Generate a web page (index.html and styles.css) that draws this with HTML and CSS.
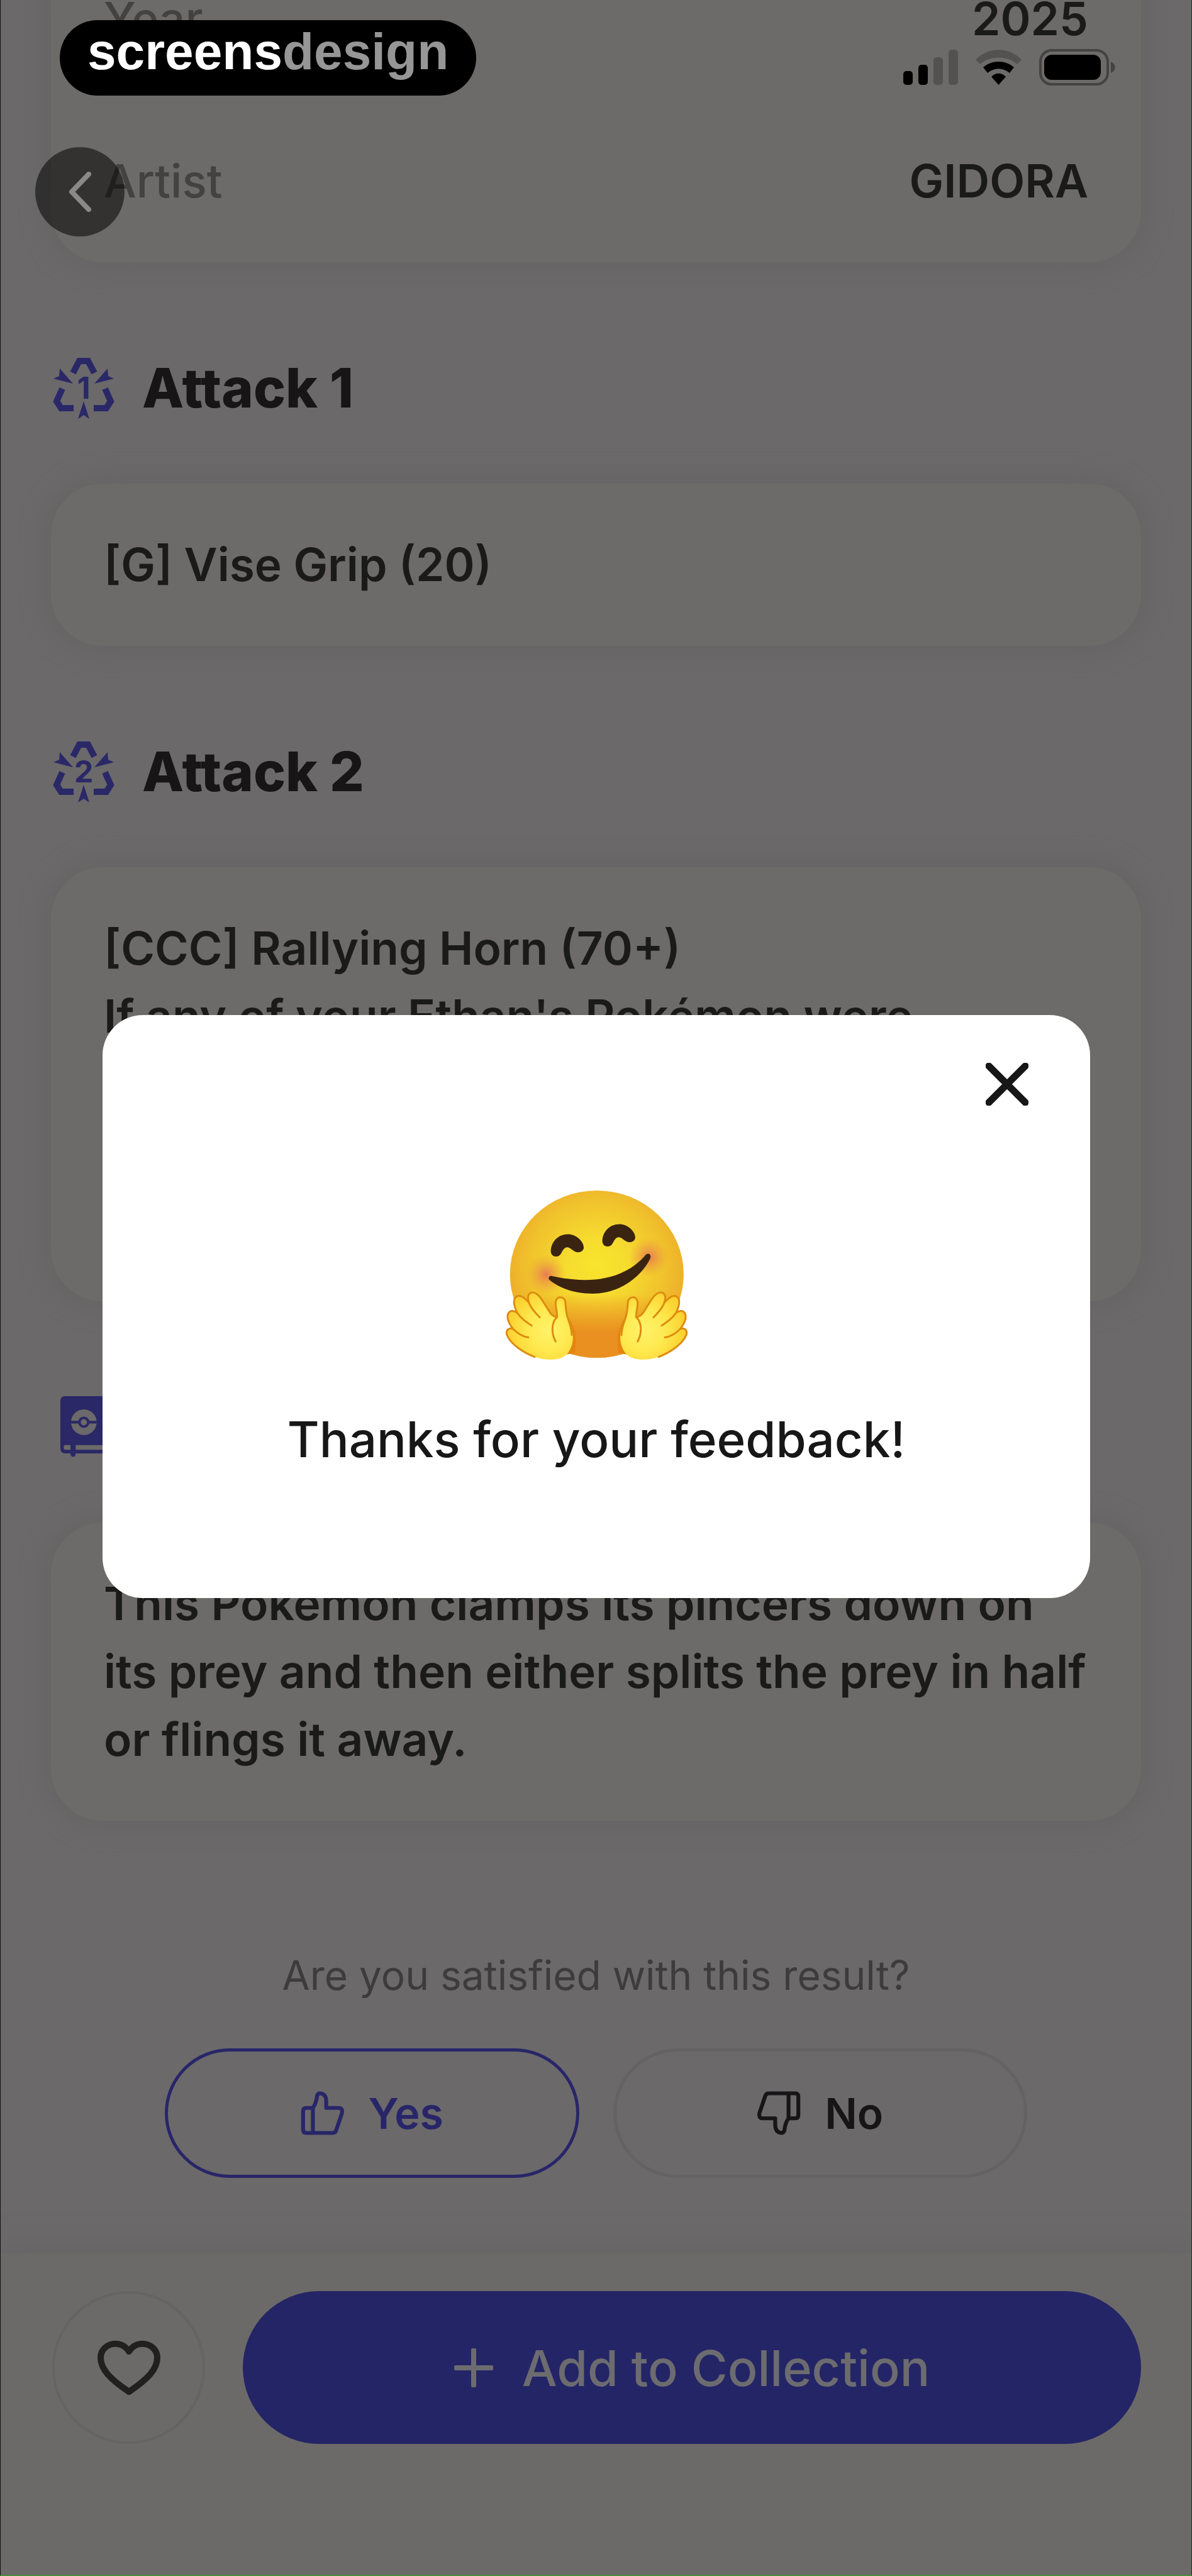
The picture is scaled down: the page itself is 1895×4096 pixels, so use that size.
FILE: index.html
```html
<!DOCTYPE html>
<html lang="en">
<head>
    <meta charset="UTF-8">
    <meta name="viewport" content="width=device-width, initial-scale=1.0">
    <title>Card details</title>
    <link rel="stylesheet" href="styles.css">
</head>
<body>
    <div class="screen">
        <!-- logo -->
        <div class="brand">screens<span class="brand-dim">design</span></div>
        <!-- status bar -->
        <div class="status">
            <svg class="signal" viewBox="0 0 87 56">
                <rect x="0" y="34" width="15" height="22" rx="5" fill="#000"/>
                <rect x="24" y="24" width="15" height="32" rx="5" fill="#000"/>
                <rect x="48" y="12" width="15" height="44" rx="5" fill="#535251"/>
                <rect x="72" y="0" width="15" height="56" rx="5" fill="#535251"/>
            </svg>
            <svg class="wifi" viewBox="0 0 73 56">
                <path d="M0 16C20 -5 53 -5 73 16L66 23C50 9 23 9 7 23Z" fill="#535251"/>
                <path d="M12 28C26 16 47 16 61 28L54 37C43 28 30 28 19 37Z" fill="#000"/>
                <path d="M25 43C32 36 41 36 48 43L36.500 56Z" fill="#000"/>
            </svg>
            <svg class="battery" viewBox="0 0 122 58">
                <rect x="2" y="2" width="107" height="54" rx="18" fill="none" stroke="#444342" stroke-width="4"/>
                <rect x="8" y="9" width="90" height="40" rx="12" fill="#000"/>
                <path d="M114 20C123 24 123 34 114 38Z" fill="#444342"/>
            </svg>
        </div>
        <button class="back" aria-label="Back">
            <svg viewBox="0 0 36 64"><path d="M32 4L5 32L32 60"/></svg>
        </button>

        <main class="content">
            <dl class="card details">
                <div class="row"><dt>Year</dt><dd>2025</dd></div>
                <div class="row"><dt>Artist</dt><dd>GIDORA</dd></div>
            </dl>

            <h2 class="title">
                <svg class="title-icon" viewBox="0 0 98 98">
                    <use href="#attack"/>
                    <text x="49" y="66">1</text>
                </svg>
                Attack 1
            </h2>
            <p class="card">[G] Vise Grip (20)</p>

            <h2 class="title">
                <svg class="title-icon" viewBox="0 0 98 98">
                    <g id="attack">
                        <path d="M32 25L42 6H56L66 25M15 50L6 70L13 81H33M83 50L92 70L85 81H65" fill="none" stroke="#2a2866" stroke-width="10"/>
                        <path d="M11 18L32 42L1 34L10 30ZM87 18L66 42L97 34L88 30ZM49 70L58 98L49 92L40 98Z"/>
                    </g>
                    <text x="49" y="66">2</text>
                </svg>
                Attack 2
            </h2>
            <p class="card">[CCC] Rallying Horn (70+)<br>If any of your Ethan's Pokémon were<br>Knocked Out by damage from an attack<br>during your opponent's last turn, this<br>attack does 100 more damage.</p>

            <h2 class="title">
                <svg class="title-icon" viewBox="21 38 336 336">
                    <path d="M88 38H320V350H88Q62 350 62 322V64Q62 38 88 38Z"/>
                    <circle cx="190" cy="180" r="70" fill="#6b696a"/>
                    <path d="M120 180H260" stroke="#2a2866" stroke-width="15"/>
                    <circle cx="190" cy="180" r="24" fill="#6b696a" stroke="#2a2866" stroke-width="14"/>
                    <path d="M84 305H118V330H84Q76 318 84 305ZM145 305H320V330H145Z" fill="#6b696a"/>
                    <path d="M118 300H145V360Q131 378 118 360Z"/>
                </svg>
                Pokédex
            </h2>
            <p class="card">This Pokémon clamps its pincers down on<br>its prey and then either splits the prey in half<br>or flings it away.</p>

            <p class="question">Are you satisfied with this result?</p>
            <div class="answers">
                <button class="answer answer-on">
                    <svg viewBox="84 64 238 238"><use href="#thumb"/></svg>
                    Yes
                </button>
                <button class="answer">
                    <svg viewBox="84 64 238 238"><g transform="rotate(180 203 183)"><path id="thumb" d="M150 155H114Q97 155 97 172V272Q97 290 115 290H256Q270 290 275 278L307 184Q313 155 290 155H222V116Q220 76 185 76Q175 78 172 92Q168 130 150 155V290"/></g></svg>
                    No
                </button>
            </div>
        </main>

        <footer class="bar">
            <button class="like" aria-label="Like">
                <svg viewBox="0 0 100 88"><path d="M50 82C20 62 5 46 5 28C5 6 36 -4 50 18C64 -4 95 6 95 28C95 46 80 62 50 82Z"/></svg>
            </button>
            <button class="add">
                <svg viewBox="0 0 62 62"><path d="M31 3V59M3 31H59"/></svg>
                Add to Collection
            </button>
        </footer>

        <!-- feedback dialog -->
        <div class="overlay">
            <div class="modal" role="dialog" aria-label="Feedback">
                <button class="close" aria-label="Close">
                    <svg viewBox="0 0 68 68"><path d="M5 5L63 63M63 5L5 63"/></svg>
                </button>
                <svg class="hug" viewBox="160 170 994 930">
                    <defs>
                        <radialGradient id="face" cx=".5" cy=".45" r=".56">
                            <stop offset="0" stop-color="#f9e52c"/>
                            <stop offset=".3" stop-color="#f6dc2f"/>
                            <stop offset=".7" stop-color="#f0c22c"/>
                            <stop offset=".9" stop-color="#eeb02a"/>
                            <stop offset="1" stop-color="#e58f20"/>
                        </radialGradient>
                        <linearGradient id="chin" x1="0" y1="0" x2="0" y2="1">
                            <stop offset=".62" stop-color="#e99020" stop-opacity="0"/>
                            <stop offset=".85" stop-color="#e99020"/>
                        </linearGradient>
                        <radialGradient id="blush">
                            <stop offset="0" stop-color="#e97c52"/>
                            <stop offset="1" stop-color="#eda03c" stop-opacity="0"/>
                        </radialGradient>
                        <radialGradient id="palm" cx=".65" cy=".55" r=".65">
                            <stop offset="0" stop-color="#fff26a"/>
                            <stop offset=".5" stop-color="#fee94f"/>
                            <stop offset="1" stop-color="#fbcf2d"/>
                        </radialGradient>
                    </defs>
                    <ellipse cx="658" cy="628" rx="472" ry="455" fill="url(#face)"/>
                    <ellipse cx="658" cy="628" rx="472" ry="455" fill="url(#chin)"/>
                    <circle cx="382" cy="630" r="108" fill="url(#blush)"/>
                    <circle cx="942" cy="535" r="108" fill="url(#blush)"/>
                    <g fill="#3a2411">
                        <path id="eye" d="M408 502C410 450 450 411 500 411C545 411 586 448 587 483C587 505 560 515 541 506C524 498 512 482 497 482C480 482 472 502 463 517C448 542 408 537 408 502Z"/>
                        <use href="#eye" x="280" y="-55"/>
                        <path d="M414 638C600 680 800 670 924 523C938 508 955 522 949 540C915 620 800 734 635 734C530 734 450 700 400 659C390 648 400 636 414 638Z"/>
                    </g>
                    <g id="hand" stroke="#dd8b0e" stroke-width="10" stroke-linecap="round" stroke-linejoin="round">
                        <path d="M500 855C515 885 545 930 543 990L540 1055L495 1065Z" fill="#e58411" stroke="none"/>
                        <path d="M500 1058C470 1100 380 1100 320 1078C260 1055 190 1010 170 960C160 930 185 915 205 928C185 905 165 870 176 843C186 822 210 826 225 838C207 800 200 765 222 750C243 738 265 757 290 785C278 755 285 732 303 728C345 722 370 790 408 843C418 855 430 860 442 862C445 825 425 790 438 768C450 745 484 752 487 780C490 820 490 840 502 872C535 940 540 1005 500 1058Z" fill="url(#palm)" stroke="none"/>
                        <path d="M522 960C522 930 510 895 502 872C490 840 490 820 487 780C484 752 450 745 438 768C425 790 445 825 442 862C410 890 410 950 434 994M442 862C430 860 418 855 408 843C370 790 345 722 303 728C280 735 280 760 292 790C305 820 325 840 348 863M290 785C265 757 243 738 222 750C200 765 207 800 225 838C245 868 270 885 304 908M225 838C210 826 186 822 176 843C165 870 185 905 205 928C230 952 255 968 286 972M205 928C185 915 160 930 170 960C190 1010 260 1055 320 1078" fill="none"/>
                    </g>
                    <use href="#hand" transform="translate(1314 0) scale(-1 1)"/>
                </svg>
                <p class="thanks">Thanks for your feedback!</p>
            </div>
        </div>
    </div>
</body>
</html>
```

FILE: styles.css
```css
*{
    box-sizing:border-box;
    margin:0;
    padding:0;
}

body{
    background-color:#6b696a;
    color:#1a1a18;
    font-family:Inter,"Noto Sans",sans-serif;
    font-size:73px;
    font-weight:600;
    line-height:108px;
}

button{
    background:none;
    border:none;
    color:inherit;
    cursor:pointer;
    font:inherit;
}

svg{
    display:block;
    flex:none;
}

.screen{
    border-bottom:2px solid #4a8c3d;
    border-left:1px solid #111;
    border-right:1px solid #1c3318;
    display:flex;
    flex-direction:column;
    min-height:100vh;
    overflow:hidden;
    position:relative;
}

/* 固定在顶部的元素 */
.brand{
    background-color:#000;
    border-radius:60px;
    color:#fff;
    font-family:"Liberation Sans",Arial,sans-serif;
    font-size:82px;
    font-weight:700;
    height:120px;
    left:94px;
    line-height:100px;
    padding:0 44px;
    position:absolute;
    top:32px;
    z-index:2;
}
.brand-dim{
    color:#969696;
}
.status{
    align-items:center;
    display:flex;
    gap:28px;
    position:absolute;
    right:120px;
    top:78px;
    z-index:2;
}
.signal{
    height:56px;
    width:87px;
}
.wifi{
    height:56px;
    width:73px;
}
.battery{
    height:58px;
    width:122px;
}
.back{
    align-items:center;
    background-color:rgba(0,0,0,.53);
    border-radius:50%;
    display:flex;
    height:142px;
    justify-content:center;
    left:55px;
    position:absolute;
    top:234px;
    width:142px;
    z-index:2;
}
.back svg{
    fill:none;
    height:64px;
    stroke:#8a8988;
    stroke-linecap:round;
    stroke-linejoin:round;
    stroke-width:8;
    width:36px;
}

/* page content */
.content{
    flex:1;
    margin-top:-24px;
    padding:0 80px;
}
.card{
    background-color:#6c6b69;
    border-radius:82px;
    box-shadow:0 0 44px #646263;
    padding:75px 84px;
}
.details{
    border-radius:0 0 82px 82px;
    display:grid;
    gap:150px;
    padding-top:0;
}
.row{
    display:flex;
    justify-content:space-between;
}
.row dt{
    color:#434241;
    font-weight:500;
}
.title{
    align-items:center;
    color:#171516;
    display:flex;
    font-size:86px;
    font-weight:800;
    gap:44px;
    height:108px;
    margin:146px 0 98px 3px;
}
.title-icon{
    fill:#2a2866;
    height:98px;
    width:98px;
}
.title-icon text{
    font-size:48px;
    font-weight:700;
    text-anchor:middle;
}

/* feedback question */
.question{
    color:#3d3b3c;
    font-size:64px;
    font-weight:400;
    margin:192px 0 62px;
    text-align:center;
}
.answers{
    display:grid;
    gap:54px;
    grid-template-columns:1fr 1fr;
    padding:0 181px;
}
.answer{
    align-items:center;
    border:5px solid #646263;
    border-radius:103px;
    color:#171516;
    display:flex;
    font-size:68px;
    gap:38px;
    height:206px;
    justify-content:center;
}
.answer svg{
    fill:none;
    height:70px;
    stroke:currentColor;
    stroke-linejoin:round;
    stroke-width:21;
    width:70px;
}
.answer-on{
    border-color:#282668;
    color:#282668;
}

/* bottom bar */
.bar{
    background-color:#6b6a68;
    box-shadow:0 0 44px #646263;
    display:flex;
    gap:60px;
    padding:60px 80px 208px 82px;
}
.like{
    align-items:center;
    border:4px solid #656461;
    border-radius:50%;
    display:flex;
    height:243px;
    justify-content:center;
    width:243px;
}
.like svg{
    fill:none;
    height:88px;
    stroke:#20201f;
    stroke-linejoin:round;
    stroke-width:10;
    width:100px;
}
.add{
    align-items:center;
    background-color:#242566;
    border-radius:122px;
    color:#6c6c70;
    display:flex;
    flex:1;
    font-size:79px;
    font-weight:500;
    gap:46px;
    height:243px;
    justify-content:center;
}
.add svg{
    height:62px;
    stroke:currentColor;
    stroke-linecap:round;
    stroke-width:8;
    width:62px;
}

/* 弹窗 */
.overlay{
    align-items:center;
    display:flex;
    inset:0;
    justify-content:center;
    padding:60px 161px 0 162px;
    position:absolute;
    z-index:3;
}
.modal{
    align-items:center;
    background-color:#fff;
    border-radius:64px;
    color:#171717;
    display:flex;
    flex-direction:column;
    padding:76px 98px 198px;
    width:100%;
}
.close{
    align-self:flex-end;
}
.close svg{
    height:68px;
    stroke:#171717;
    stroke-linecap:round;
    stroke-width:11;
    width:68px;
}
.hug{
    height:272px;
    margin:134px 0 71px;
    width:291px;
}
.thanks{
    font-size:78px;
    font-weight:500;
}
```
